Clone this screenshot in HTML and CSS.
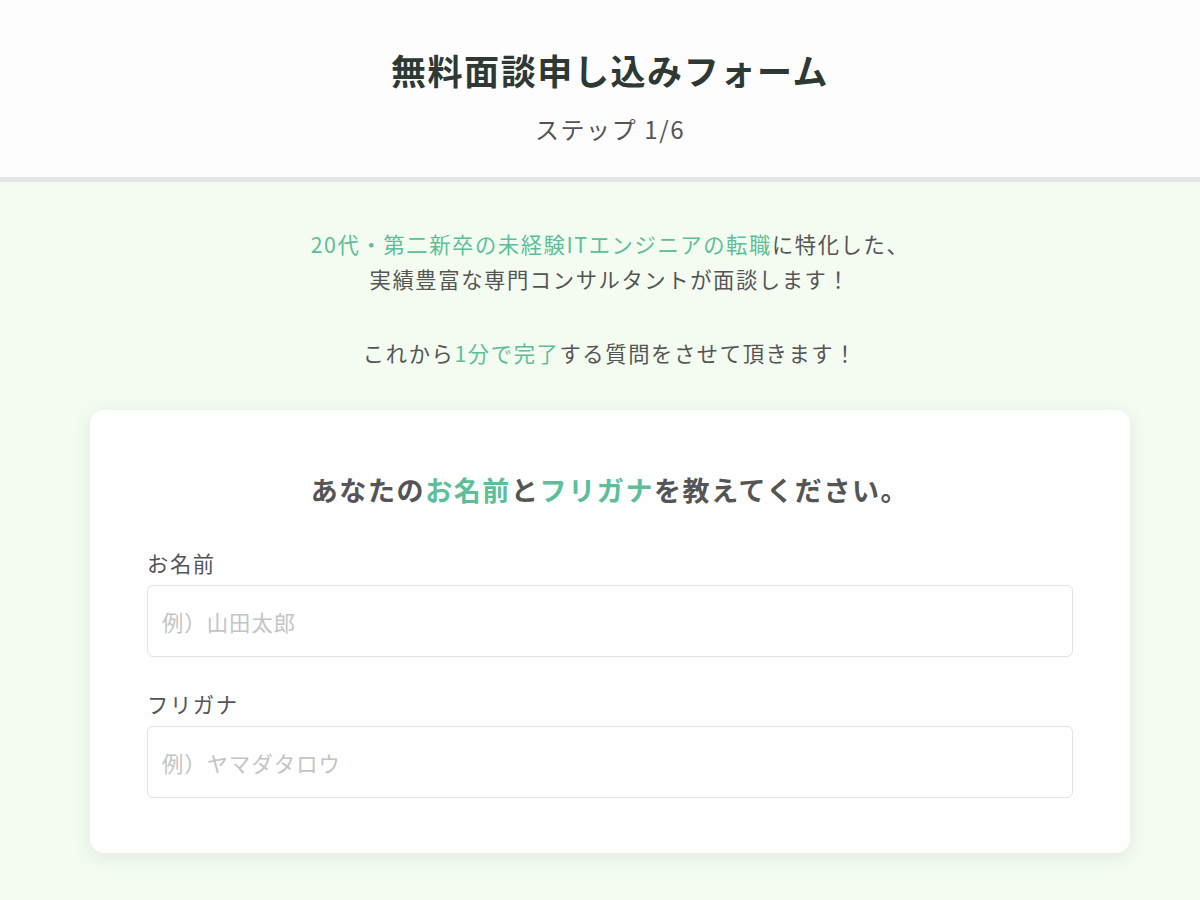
FILE: index.html
```html
<!DOCTYPE html>
<html lang="ja">
<head>
    <meta charset="UTF-8">
    <meta name="viewport" content="width=device-width, initial-scale=1.0">
    <title>無料面談申し込みフォーム</title>
    <link rel="stylesheet" href="styles.css">
</head>
<body>
    <header class="form-header">
        <h1>無料面談申し込みフォーム</h1>
        <p class="step">ステップ 1/6</p>
    </header>

    <main class="form-main">
        <div class="intro">
            <p><span class="accent">20代・第二新卒の未経験ITエンジニアの転職</span>に特化した、<br>実績豊富な専門コンサルタントが面談します！</p>
            <p>これから<span class="accent">1分で完了</span>する質問をさせて頂きます！</p>
        </div>

        <form class="card">
            <h2>あなたの<span class="accent">お名前</span>と<span class="accent">フリガナ</span>を教えてください。</h2>

            <div class="field">
                <label for="name">お名前</label>
                <input type="text" id="name" name="name" placeholder="例）山田太郎">
            </div>

            <div class="field">
                <label for="kana">フリガナ</label>
                <input type="text" id="kana" name="kana" placeholder="例）ヤマダタロウ">
            </div>
        </form>
    </main>
</body>
</html>
```

FILE: styles.css
```css
body {
    margin: 0;
    font-family: "Noto Sans CJK JP", "Noto Sans", sans-serif;
    letter-spacing: 0.1em;
    color: #555;
    background-color: #f4fcf1;
}

.form-header {
    background-color: #fdfdfd;
    border-bottom: 5px solid #e6e6e6;
    text-align: center;
    padding: 47px 0 32px 20px;
}

.form-header h1 {
    margin: 0;
    font-size: 35px;
    line-height: 46px;
    font-weight: 700;
    color: #2e3934;
}

.step {
    margin: 20px 0 0;
    font-size: 24px;
    line-height: 32px;
    color: #555;
}

.form-main {
    padding: 44px 0 45px 20px;
}

.intro {
    text-align: center;
    font-size: 21.3px;
    line-height: 35px;
}

.intro p {
    margin: 0 0 39px;
}

.intro p:last-child {
    margin-bottom: 40px;
}

.accent {
    color: #5cbf99;
}

.card {
    width: 1040px;
    box-sizing: border-box;
    margin: 0 auto;
    padding: 62px 57px 55px;
    background-color: #fefefe;
    border-radius: 14px;
    box-shadow: 0 4px 18px rgba(80, 110, 80, 0.13);
}

.card h2 {
    margin: 0 0 40px;
    text-align: center;
    font-size: 27px;
    line-height: 36px;
    font-weight: 700;
    color: #555;
}

.field {
    display: flex;
    flex-direction: column;
    gap: 7px;
    margin-bottom: 32px;
}

.field:last-child {
    margin-bottom: 0;
}

.field label {
    font-size: 21.3px;
    line-height: 30px;
    color: #555;
}

.field input {
    height: 72px;
    box-sizing: border-box;
    padding: 0 14px;
    border: 1px solid #e2e2e2;
    border-radius: 6px;
    background-color: #fefefe;
    font-family: inherit;
    font-size: 21.3px;
    letter-spacing: 0.05em;
    color: #555;
}

.field input::placeholder {
    color: #c4c4c4;
}
```
